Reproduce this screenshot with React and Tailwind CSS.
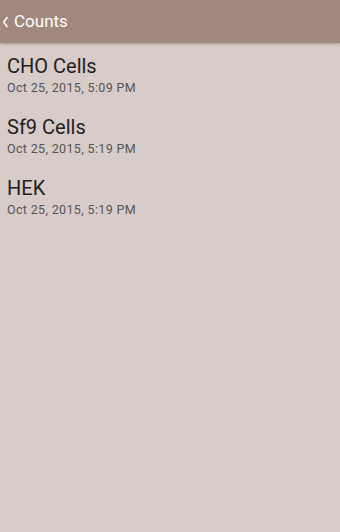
const counts = [
  { name: 'CHO Cells', date: 'Oct 25, 2015, 5:09 PM' },
  { name: 'Sf9 Cells', date: 'Oct 25, 2015, 5:19 PM' },
  { name: 'HEK', date: 'Oct 25, 2015, 5:19 PM' },
];

export default function App() {
  return (
    <div className="flex h-[532px] w-[340px] flex-col bg-[#d7ccc8] font-['Roboto',sans-serif]">
      {/* ── Action bar ───────────────────────────── */}
      <div className="flex h-[43px] items-center bg-[#a1887f] shadow-[0_1px_3px_rgba(0,0,0,0.25)]">
        <svg viewBox="0 0 6 12" className="ml-[2px] mr-[6px] h-[12px] w-[6px]" fill="none">
          <path d="M5 1.5 L1.8 6 L5 10.5" stroke="white" strokeWidth="1.6" strokeLinecap="round" strokeLinejoin="round" />
        </svg>
        <span className="text-[17px] text-white">Counts</span>
      </div>

      {/* ── List ─────────────────────────────────── */}
      <div className="flex flex-col pt-[11px]">
        {counts.map((c) => (
          <div key={c.name} className="flex h-[61px] flex-col px-[7px]">
            <span className="text-[20px] leading-[24px] text-[#212121]">{c.name}</span>
            <span className="mt-[2px] text-[12.5px] leading-[16px] tracking-[0.35px] text-[#555]">{c.date}</span>
          </div>
        ))}
      </div>
    </div>
  );
}
